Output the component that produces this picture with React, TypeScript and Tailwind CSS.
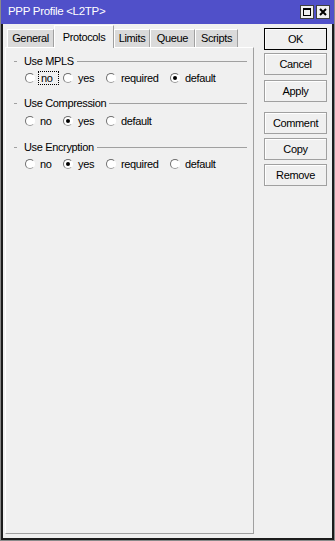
import React from "react";

const Radio = ({ checked }: { checked?: boolean }) => (
  <span className="relative inline-block w-[10px] h-[10px] rounded-full bg-white border border-[#6e6e6e] border-r-white border-b-[#9a9a9a] shrink-0">
    {checked && (
      <span className="absolute left-[2px] top-[2px] w-[4px] h-[4px] rounded-full bg-black" />
    )}
  </span>
);

const Option = ({
  label,
  checked,
  w,
  focus,
}: {
  label: string;
  checked?: boolean;
  w: string;
  focus?: boolean;
}) => (
  <div className={`flex items-center h-[14px] shrink-0 ${w}`}>
    <Radio checked={checked} />
    {focus ? (
      <span className="ml-[3px] pl-[2px] pr-[5px] h-[14px] leading-[12px] border border-dotted border-black">
        {label}
      </span>
    ) : (
      <span className="ml-[5px]">{label}</span>
    )}
  </div>
);

const GroupHeader = ({ title }: { title: string }) => (
  <div className="flex items-center h-[14px]">
    <div className="ml-[8px] w-[3px] border-t border-[#a0a0a0]" />
    <span className="ml-[7px] mr-[3px] whitespace-nowrap">{title}</span>
    <div className="flex-1 mr-[6px] border-t border-[#a0a0a0]" />
  </div>
);

const Btn = ({ label, def, mt }: { label: string; def?: boolean; mt: string }) => (
  <div
    className={`${mt} h-[22px] w-[63px] flex items-center justify-center bg-[#f0f0f0] border ${
      def ? "border-black" : "border-[#a0a0a0]"
    } shadow-[inset_1px_1px_0_#ffffff]`}
  >
    {label}
  </div>
);

export default function App() {
  return (
    <div className="w-[335px] h-[541px] flex flex-col bg-[#f0f0f0] font-['Liberation_Sans',Arial,sans-serif] text-[11px] tracking-[-0.35px] text-black border-x border-b border-[#8a8a8a]">
      {/* Title bar */}
      <div className="h-[24px] bg-[#5050c9] flex items-center shrink-0">
        <span className="ml-[7px] text-white text-[11.5px] tracking-[-0.3px]">PPP Profile &lt;L2TP&gt;</span>
        <div className="ml-auto mr-[4px] flex gap-[2px]">
          <div className="w-[14px] h-[14px] bg-[#f0f0f0] border border-[#404040] flex items-center justify-center">
            <div className="w-[8px] h-[8px] border border-black border-t-2" />
          </div>
          <div className="w-[14px] h-[14px] bg-[#f0f0f0] border border-[#404040] flex items-center justify-center">
            <svg width="8" height="8" viewBox="0 0 8 8">
              <path d="M1 1 L7 7 M7 1 L1 7" stroke="black" strokeWidth="2" />
            </svg>
          </div>
        </div>
      </div>

      {/* Body */}
      <div className="flex-1 flex border-x-2 border-b-2 border-[#1c1c1c]">
        {/* Left column */}
        <div className="ml-[2px] w-[249px] flex flex-col pb-[4px]">
          {/* Tabs */}
          <div className="h-[23px] flex items-end pl-[2px] shrink-0 relative z-10">
            <div className="h-[18px] w-[47px] bg-[#dadada] border-l border-t border-white border-r border-r-[#a0a0a0] flex items-center justify-center">
              General
            </div>
            <div className="h-[23px] w-[60px] bg-[#f0f0f0] border-l border-t border-white border-r border-r-[#a0a0a0] flex items-start justify-center pt-[3px] -mb-[1px]">
              Protocols
            </div>
            <div className="h-[18px] w-[36px] bg-[#dadada] border-l border-t border-white border-r border-r-[#a0a0a0] flex items-center justify-center">
              Limits
            </div>
            <div className="h-[18px] w-[45px] bg-[#dadada] border-l border-t border-white border-r border-r-[#a0a0a0] flex items-center justify-center">
              Queue
            </div>
            <div className="h-[18px] w-[43px] bg-[#dadada] border-l border-t border-white border-r border-r-[#a0a0a0] flex items-center justify-center">
              Scripts
            </div>
          </div>
          {/* Panel */}
          <div className="flex-1 border border-white border-r-[#a0a0a0] border-b-[#a0a0a0] pt-[6px]">
            <GroupHeader title="Use MPLS" />
            <div className="mt-[3px] ml-[19px] flex">
              <Option label="no" w="w-[38px]" focus />
              <Option label="yes" w="w-[43px]" />
              <Option label="required" w="w-[64px]" />
              <Option label="default" w="w-[60px]" checked />
            </div>

            <div className="mt-[11px]">
              <GroupHeader title="Use Compression" />
            </div>
            <div className="mt-[4px] ml-[19px] flex">
              <Option label="no" w="w-[38px]" />
              <Option label="yes" w="w-[43px]" checked />
              <Option label="default" w="w-[64px]" />
            </div>

            <div className="mt-[12px]">
              <GroupHeader title="Use Encryption" />
            </div>
            <div className="mt-[3px] ml-[19px] flex">
              <Option label="no" w="w-[38px]" />
              <Option label="yes" w="w-[43px]" checked />
              <Option label="required" w="w-[64px]" />
              <Option label="default" w="w-[60px]" />
            </div>
          </div>
        </div>

        {/* Right column: buttons */}
        <div className="ml-[10px] flex flex-col">
          <Btn label="OK" def mt="mt-[4px]" />
          <Btn label="Cancel" mt="mt-[3px]" />
          <Btn label="Apply" mt="mt-[5px]" />
          <Btn label="Comment" mt="mt-[10px]" />
          <Btn label="Copy" mt="mt-[4px]" />
          <Btn label="Remove" mt="mt-[4px]" />
        </div>
      </div>
    </div>
  );
}
